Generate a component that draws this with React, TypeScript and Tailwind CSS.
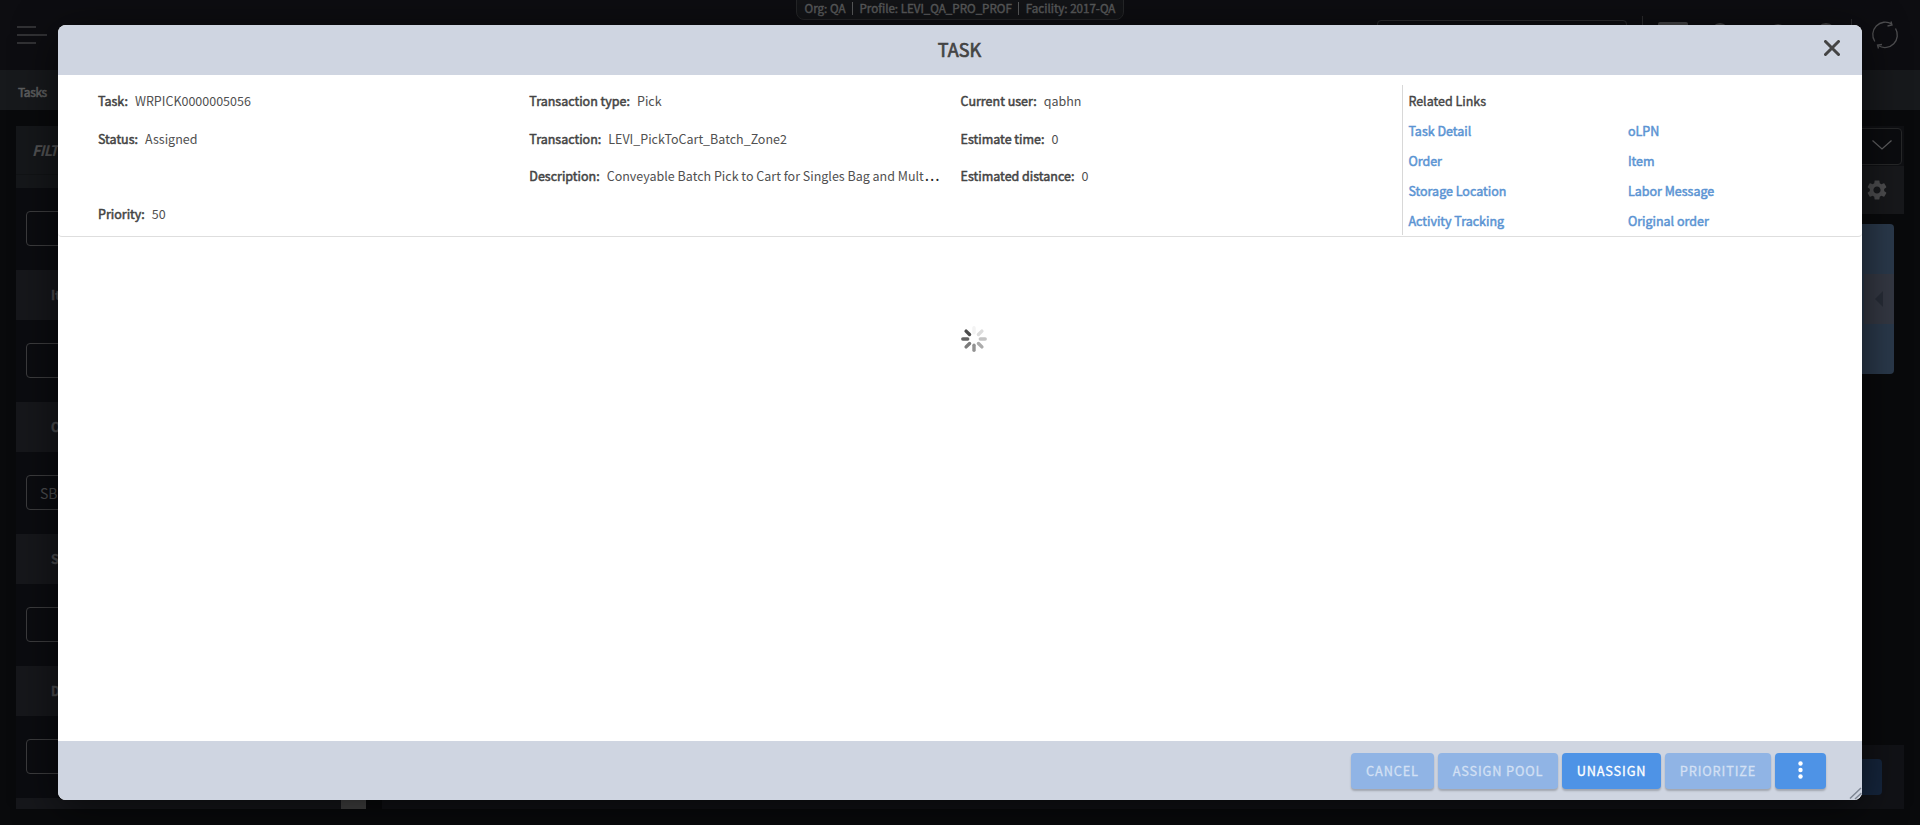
import React from "react";

const inputs = ["", "", "SBS", "", ""];
const heads = ["Item", "Order", "Status", "Date"];

function Field({ label, value, cut }: { label: string; value: string; cut?: boolean }) {
  return (
    <div className="flex h-[37.5px] w-[431px] items-center gap-[7px] whitespace-nowrap">
      <span className="[-webkit-text-stroke:0.5px_#444]">{label}</span>
      <span className="text-[#505050]">
        {value}
        {cut && <span className="ml-px font-['Noto_Sans',sans-serif] text-[16px] leading-[10px] tracking-[1px] text-[#222]">...</span>}
      </span>
    </div>
  );
}

function Link({ children }: { children: string }) {
  return (
    <a className="flex h-[30px] w-[219.5px] items-center text-[#5b94d3] [-webkit-text-stroke:0.5px_#5b94d3]">{children}</a>
  );
}

function Btn({ w, children, off }: { w: string; children: React.ReactNode; off?: boolean }) {
  return (
    <button
      className={`flex h-[36px] items-center justify-center rounded-[4px] text-[12.75px] tracking-[0.85px] shadow-[0_2px_2px_rgba(0,0,0,0.22)] ${w} ${
        off ? "bg-[#90b4e5] text-[#d3e0f4] [-webkit-text-stroke:0.3px_#d3e0f4]" : "bg-[#4e93e6] text-white [-webkit-text-stroke:0.3px_#fff]"
      }`}
    >
      {children}
    </button>
  );
}

function Spinner() {
  const shades = ["#f3f3f3", "#dcdcdc", "#c4c4c4", "#ababab", "#929292", "#7b7b7b", "#646464", "#4b4b4b"];
  return (
    <svg width="26" height="26" viewBox="-13 -13 26 26">
      {shades.map((c, i) => (
        <line key={i} x1="0" y1="-6.3" x2="0" y2="-11.2" stroke={c} strokeWidth="3.4" strokeLinecap="round" transform={`rotate(${i * 45})`} />
      ))}
    </svg>
  );
}

export default function App() {
  return (
    <div className="relative h-[825px] w-[1920px] overflow-hidden bg-[#090a0c] font-['Noto_Sans_CJK_SC',sans-serif] text-[12.5px] leading-[20px] text-[#444]">
      <header className="flex h-[70px] items-start justify-between bg-[#0d0d11] pr-[20px] pl-[17px]">
        <svg className="mt-[25px]" width="31" height="20" viewBox="0 0 31 20" stroke="#3e3e40" strokeWidth="1.7">
          <path d="M0 2h19M0 10h30M0 18h19" />
        </svg>
        <div className="flex">
          <div className="mt-[20px] h-[36px] w-[250px] rounded-[4px] border border-[#2c2c2e]" />
          <div className="mt-[16px] ml-[15px] h-[40px] w-px bg-[#2b2b2d]" />
          <div className="mt-[22px] ml-[15px] h-[20px] w-[30px] rounded-[2px] bg-[#434345]" />
          <div className="mt-[23px] ml-[23px] h-[18px] w-[18px] rounded-full bg-[#434345]" />
          <div className="mt-[24px] ml-[40px] h-[18px] w-[18px] rounded-full bg-[#434345]" />
          <div className="mt-[23px] ml-[29px] h-[20px] w-[20px] rounded-full bg-[#434345]" />
          <div className="mt-[19px] ml-[15px] h-[40px] w-px bg-[#2b2b2d]" />
          <svg className="mt-[19px] ml-[18px]" width="30" height="32" viewBox="0 0 30 32" fill="none" stroke="#4e4e50" strokeWidth="1.3">
            <path d="M4.800 22.500A12.500 12.500 0 0 1 21.800 5M25.500 9.500A12.500 12.500 0 0 1 8.500 26.800M21 2.500l1 3.500-4.500 1M8.500 29.500l-1-3.500 4.500-.500" />
          </svg>
        </div>
      </header>
      <div className="flex h-[40px] items-center bg-[#17191c] pt-[3px] pl-[18px] text-[12px] tracking-[-0.4px] text-[#5c5d5e] [-webkit-text-stroke:0.6px_#5c5d5e]">Tasks</div>

      <div className="flex justify-between pt-[16px] pr-[16px] pl-[16px]">
        <aside className="flex h-[683px] w-[350px] overflow-hidden bg-[#0b0c10]">
          <div className="w-[325px] shrink-0">
            <div className="h-[62px] bg-[#15171a]">
              <div className="h-[49px] border-b border-[#111315] pt-[14px] pl-[16px] text-[14.5px] font-bold tracking-[-0.8px] text-[#525253] italic">FILTERS</div>
            </div>
            {inputs.map((v, i) => (
              <div key={i}>
                <div className="h-[82px] pt-[23px] pl-[10px]">
                  <div className="flex h-[35px] w-[305px] items-center rounded-[4px] border border-[#3c3c3e] pl-[13px] text-[14px] text-[#4c4c4e]">{v}</div>
                </div>
                <div className="flex h-[50px] items-center bg-[#16171b] pl-[35px] text-[12.5px] font-bold text-[#4c4c4e] [-webkit-text-stroke:0.4px_#4c4c4e]">{heads[i]}</div>
              </div>
            ))}
          </div>
          <div className="w-[25px] bg-[#454545]" />
        </aside>
        <main className="flex h-[683px] w-[1522px] flex-col">
          <div className="flex h-[40px] justify-end bg-[#0f1013] pt-[2px] pr-[2px]">
            <div className="flex h-[37px] w-[300px] items-center justify-end rounded-[4px] border border-[#262728] bg-[#0b0c0f] pr-[9px] pb-[3px]">
              <svg width="20" height="10" viewBox="0 0 20 10" fill="none" stroke="#5c5c5e" strokeWidth="1.3"><path d="M0.500 0.500L10 9L19.500 0.500" /></svg>
            </div>
          </div>
          <div className="flex h-[48px] items-center justify-end bg-[#17181b] pr-[17px]">
            <svg width="20" height="20" viewBox="2 2 20 20" fill="#4d4d4f">
              <path d="M19.140 12.940c.040-.300.060-.610.060-.940s-.020-.640-.070-.940l2.030-1.580c.180-.140.230-.410.120-.610l-1.920-3.320c-.120-.220-.370-.290-.590-.220l-2.390.960c-.500-.380-1.030-.700-1.620-.940L14.400 2.810c-.040-.240-.240-.410-.480-.410h-3.840c-.240 0-.430.170-.470.410L9.250 5.350c-.590.240-1.130.570-1.620.940l-2.390-.960c-.220-.080-.470 0-.590.220L2.740 8.870c-.120.210-.080.470.120.610l2.030 1.580c-.050.300-.090.630-.090.940s.020.640.070.940l-2.030 1.580c-.180.140-.230.410-.120.610l1.920 3.320c.120.220.370.290.590.220l2.390-.960c.500.380 1.030.700 1.620.940l.360 2.540c.050.240.240.410.480.410h3.840c.240 0 .440-.170.470-.410l.360-2.540c.590-.240 1.130-.560 1.620-.940l2.390.960c.220.080.470 0 .590-.220l1.920-3.320c.120-.220.070-.470-.120-.610l-2.010-1.580zM12 15.600c-1.980 0-3.600-1.620-3.600-3.600s1.620-3.600 3.600-3.600 3.600 1.620 3.600 3.600-1.620 3.600-3.600 3.600z" />
            </svg>
          </div>
          <div className="mt-[10px] mr-[10px] flex h-[150px] items-center justify-end rounded-[4px] bg-[#2a394b]">
            <div className="flex h-[50px] w-[30px] items-center justify-end bg-[#343843] pr-[11px]">
              <svg width="8" height="16" viewBox="0 0 8 16" fill="#272c37"><path d="M8 0v16L0 8z" /></svg>
            </div>
          </div>
          <div className="mt-auto flex h-[64px] items-center justify-end bg-[#111216] pr-[22px]">
            <div className="h-[36px] w-[120px] rounded-[4px] bg-[#15253c]" />
          </div>
        </main>
      </div>

      <div className="absolute top-[-10px] left-[796px] flex h-[30px] w-[328px] items-end justify-center gap-[6.5px] rounded-[8px] border border-[#252628] bg-[#131417] pb-px text-[11.6px] whitespace-nowrap text-[#58595a] [-webkit-text-stroke:0.45px_#58595a]">
        <span>Org: QA</span>
        <i className="mb-[3px] h-[13px] w-px bg-[#58595a]" />
        <span>Profile: LEVI_QA_PRO_PROF</span>
        <i className="mb-[3px] h-[13px] w-px bg-[#58595a]" />
        <span>Facility: 2017-QA</span>
      </div>

      <section className="absolute top-[25px] left-[58px] flex h-[775px] w-[1804px] flex-col overflow-hidden rounded-[8px] bg-white shadow-[0_8px_44px_rgba(0,0,0,0.6)]">
        <div className="relative flex h-[50px] shrink-0 items-center justify-center bg-[#cfd5e1] pr-px pb-[2px] text-[18px] [-webkit-text-stroke:0.7px_#444]">
          TASK
          <svg className="absolute top-[15px] right-[22px]" width="16" height="16" viewBox="0 0 16 16" stroke="#444" strokeWidth="3" strokeLinecap="round"><path d="M1.500 1.500l13 13M14.500 1.500l-13 13" /></svg>
        </div>
        <div className="flex h-[162px] shrink-0 rounded-b-[4px] border-b border-[#dedede] pt-[7.5px] pl-[40px]">
          {[
            [["Task:", "WRPICK0000005056"], ["Status:", "Assigned"], ["", ""], ["Priority:", "50"]],
            [["Transaction type:", "Pick"], ["Transaction:", "LEVI_PickToCart_Batch_Zone2"], ["Description:", "Conveyable Batch Pick to Cart for Singles Bag and Mult"]],
            [["Current user:", "qabhn"], ["Estimate time:", "0"], ["Estimated distance:", "0"]],
          ].map((col, i) => (
            <div key={i} className="w-[431.3px]">
              {col.map(([l, v], j) => <Field key={j} label={l} value={v} cut={l === "Description:"} />)}
            </div>
          ))}
          <div className="mt-[2.5px] ml-[10px] h-[150px] w-[450px] border-l border-[#d8d8d8] pl-[5.5px]">
            <div className="mt-px flex h-[30px] items-center [-webkit-text-stroke:0.4px_#444]">Related Links</div>
            <div className="flex flex-wrap">
              {["Task Detail", "oLPN", "Order", "Item", "Storage Location", "Labor Message", "Activity Tracking", "Original order"].map((t) => <Link key={t}>{t}</Link>)}
            </div>
          </div>
        </div>
        <div className="flex grow justify-center pt-[89px] pl-[28px]"><Spinner /></div>
        <div className="relative flex h-[59px] shrink-0 justify-end gap-[4px] bg-[#cfd5e1] pt-[12px] pr-[36px]">
          <Btn w="w-[83px]" off>CANCEL</Btn>
          <Btn w="w-[120px]" off>ASSIGN POOL</Btn>
          <Btn w="w-[99px]">UNASSIGN</Btn>
          <Btn w="w-[106px]" off>PRIORITIZE</Btn>
          <Btn w="w-[51px]">
            <svg className="mr-px" width="5" height="20" viewBox="0 0 5 20" fill="#fff"><circle cx="2.500" cy="2.500" r="2.200" /><circle cx="2.500" cy="9" r="2.200" /><circle cx="2.500" cy="15.500" r="2.200" /></svg>
          </Btn>
          <svg className="absolute right-0 bottom-0" width="13" height="13" viewBox="0 0 13 13" stroke="#7f8794" strokeWidth="1.500"><path d="M1 11.500L12 1M6 12L12.500 6" /></svg>
        </div>
      </section>
    </div>
  );
}
